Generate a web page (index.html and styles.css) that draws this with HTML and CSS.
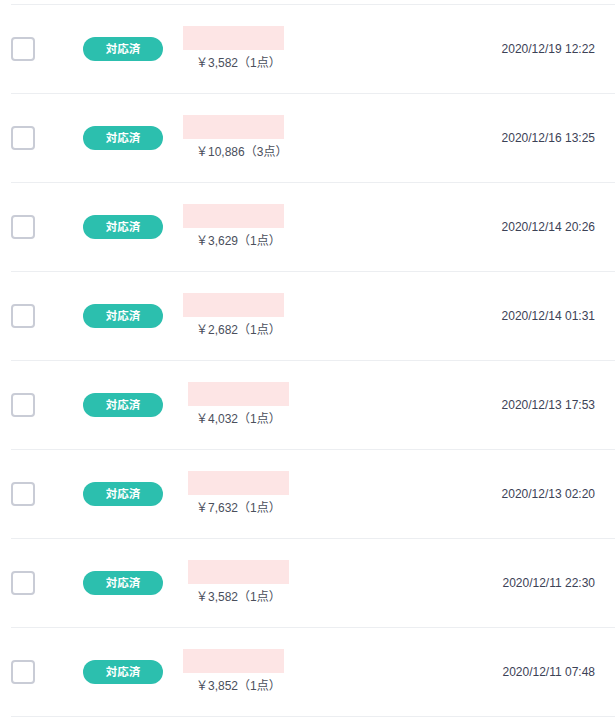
FILE: index.html
```html
<!DOCTYPE html>
<html lang="ja">
<head>
<meta charset="utf-8">
<link rel="stylesheet" href="styles.css">
</head>
<body>
<div class="list">
  <div class="row">
    <span class="check"></span>
    <span class="badge">対応済</span>
    <div class="item"><div class="name"></div><div class="price">￥3,582（1点）</div></div>
    <div class="date">2020/12/19 12:22</div>
  </div>
  <div class="row">
    <span class="check"></span>
    <span class="badge">対応済</span>
    <div class="item"><div class="name"></div><div class="price">￥10,886（3点）</div></div>
    <div class="date">2020/12/16 13:25</div>
  </div>
  <div class="row">
    <span class="check"></span>
    <span class="badge">対応済</span>
    <div class="item"><div class="name"></div><div class="price">￥3,629（1点）</div></div>
    <div class="date">2020/12/14 20:26</div>
  </div>
  <div class="row">
    <span class="check"></span>
    <span class="badge">対応済</span>
    <div class="item"><div class="name"></div><div class="price">￥2,682（1点）</div></div>
    <div class="date">2020/12/14 01:31</div>
  </div>
  <div class="row">
    <span class="check"></span>
    <span class="badge">対応済</span>
    <div class="item"><div class="name name-shift"></div><div class="price">￥4,032（1点）</div></div>
    <div class="date">2020/12/13 17:53</div>
  </div>
  <div class="row">
    <span class="check"></span>
    <span class="badge">対応済</span>
    <div class="item"><div class="name name-shift"></div><div class="price">￥7,632（1点）</div></div>
    <div class="date">2020/12/13 02:20</div>
  </div>
  <div class="row">
    <span class="check"></span>
    <span class="badge">対応済</span>
    <div class="item"><div class="name name-shift"></div><div class="price">￥3,582（1点）</div></div>
    <div class="date">2020/12/11 22:30</div>
  </div>
  <div class="row">
    <span class="check"></span>
    <span class="badge">対応済</span>
    <div class="item"><div class="name"></div><div class="price">￥3,852（1点）</div></div>
    <div class="date">2020/12/11 07:48</div>
  </div>
</div>
</body>
</html>
```

FILE: styles.css
```css
html, body {
  margin: 0;
  padding: 0;
  background: #ffffff;
}
body {
  font-family: "Liberation Sans", "Noto Sans CJK JP", sans-serif;
  color: #3f4454;
}
.list {
  margin-left: 11px;
  padding-top: 4px;
}
.row {
  display: flex;
  align-items: center;
  height: 88px;
  border-top: 1px solid #eceef1;
}
.row:last-child {
  border-bottom: 1px solid #eceef1;
}
.check {
  box-sizing: border-box;
  width: 24px;
  height: 24px;
  border: 2px solid #c9ccd6;
  border-radius: 4px;
  flex: none;
}
.badge {
  box-sizing: border-box;
  margin-left: 48px;
  width: 80px;
  height: 24px;
  border-radius: 12px;
  background: #2cbfae;
  color: #ffffff;
  font-family: "Noto Sans CJK JP", sans-serif;
  font-size: 11.5px;
  font-weight: 700;
  line-height: 23px;
  text-align: center;
  flex: none;
}
.item {
  margin-left: 20px;
  display: flex;
  flex-direction: column;
  margin-top: 1px;
}
.name {
  width: 101px;
  height: 24px;
  background: #fde5e5;
}
.name-shift {
  margin-left: 5px;
}
.price {
  margin-top: 3px;
  padding-left: 13px;
  font-size: 12px;
  line-height: 20px;
  color: #4a4f5c;
  white-space: nowrap;
}
.date {
  margin-left: auto;
  margin-right: 20px;
  font-size: 12px;
  color: #3c4256;
  white-space: nowrap;
}
```
